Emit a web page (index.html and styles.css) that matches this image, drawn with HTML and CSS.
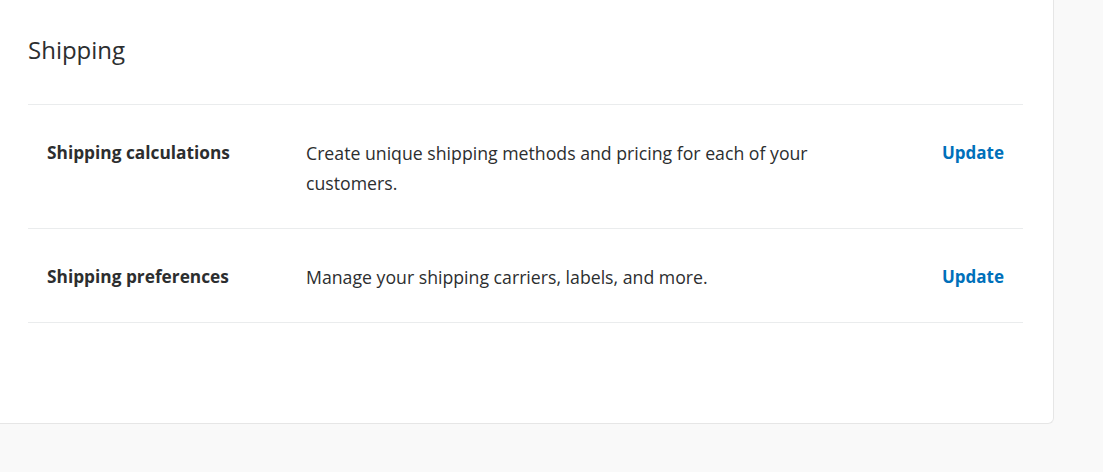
FILE: index.html
```html
<!DOCTYPE html>
<html lang="en">
<head>
<meta charset="utf-8">
<title>Shipping</title>
<link rel="stylesheet" href="styles.css">
</head>
<body>
<div class="page">
  <section class="card">
    <h2 class="card-title">Shipping</h2>
    <ul class="rows">
      <li class="row">
        <div class="row-label">Shipping calculations</div>
        <div class="row-desc">Create unique shipping methods and pricing for each of your customers.</div>
        <a class="row-action" href="#">Update</a>
      </li>
      <li class="row">
        <div class="row-label">Shipping preferences</div>
        <div class="row-desc">Manage your shipping carriers, labels, and more.</div>
        <a class="row-action" href="#">Update</a>
      </li>
    </ul>
  </section>
</div>
</body>
</html>
```

FILE: styles.css
```css
html, body {
  margin: 0;
  padding: 0;
  background: #f9f9f9;
}
body {
  font-family: "Open Sans", "Noto Sans", sans-serif;
  color: #2c2e2f;
}
.page {
  width: 1103px;
  height: 472px;
  overflow: hidden;
}
.card {
  width: 995px;
  background: #fff;
  border: 1px solid #e6e6e6;
  border-left: none;
  border-top: none;
  border-bottom-right-radius: 6px;
  padding: 34px 30px 100px 28px;
}
.card-title {
  margin: 0;
  font-size: 24px;
  font-weight: 400;
  line-height: 32px;
  padding-bottom: 38px;
  border-bottom: 1px solid #eaeced;
}
.rows {
  list-style: none;
  margin: 0;
  padding: 0;
}
.row {
  display: flex;
  align-items: flex-start;
  padding: 33px 19px 30px 19px;
  border-bottom: 1px solid #eaeced;
  font-size: 17.7px;
  line-height: 30px;
}
.row-label {
  width: 259px;
  font-size: 17.3px;
  font-weight: 700;
  flex: none;
}
.row-desc {
  flex: 1;
  max-width: 525px;
}
.row-action {
  margin-left: auto;
  color: #0070ba;
  font-size: 17px;
  font-weight: 700;
  text-decoration: none;
}
```
